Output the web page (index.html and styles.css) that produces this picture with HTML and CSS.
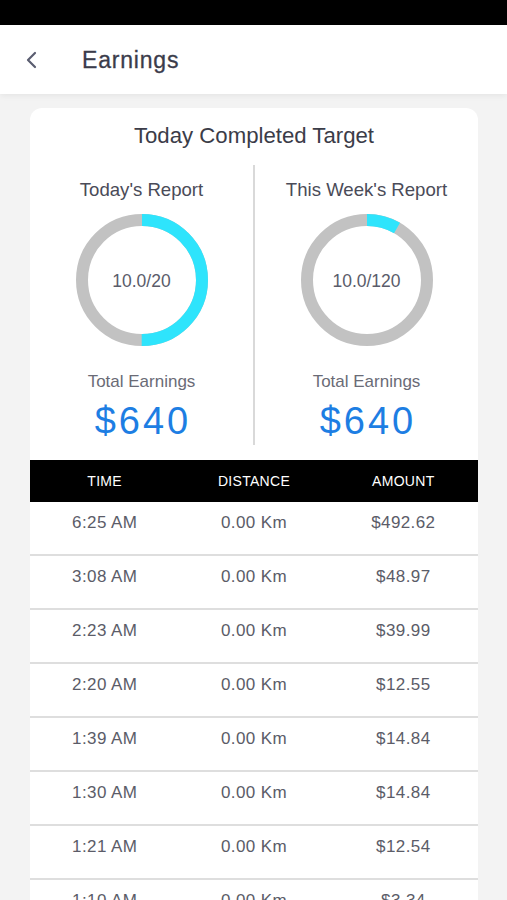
FILE: index.html
```html
<!DOCTYPE html>
<html>
<head>
<meta charset="utf-8">
<link rel="stylesheet" href="styles.css">
</head>
<body>
<div class="status"></div>
<header class="topbar">
  <svg class="back" width="14" height="18" viewBox="0 0 14 18"><path d="M11 2 L4 9 L11 16" fill="none" stroke="#5a5d70" stroke-width="2.2" stroke-linecap="round" stroke-linejoin="round"/></svg>
  <h1 class="title">Earnings</h1>
</header>
<main class="card">
  <h2 class="card-title">Today Completed Target</h2>
  <div class="reports">
    <section class="report">
      <div class="report-label">Today's Report</div>
      <div class="ring">
        <svg width="132" height="132" viewBox="0 0 132 132">
          <circle cx="66" cy="66" r="60" fill="none" stroke="#c2c2c2" stroke-width="12"/>
          <circle cx="66" cy="66" r="60" fill="none" stroke="#2ee4fc" stroke-width="12" stroke-dasharray="188.5 400" transform="rotate(-90 66 66)"/>
        </svg>
        <span class="ring-text">10.0/20</span>
      </div>
      <div class="earn-label">Total Earnings</div>
      <div class="earn-value">$640</div>
    </section>
    <div class="divider"></div>
    <section class="report">
      <div class="report-label">This Week's Report</div>
      <div class="ring">
        <svg width="132" height="132" viewBox="0 0 132 132">
          <circle cx="66" cy="66" r="60" fill="none" stroke="#c2c2c2" stroke-width="12"/>
          <circle cx="66" cy="66" r="60" fill="none" stroke="#2ee4fc" stroke-width="12" stroke-dasharray="31.4 400" transform="rotate(-90 66 66)"/>
        </svg>
        <span class="ring-text">10.0/120</span>
      </div>
      <div class="earn-label">Total Earnings</div>
      <div class="earn-value">$640</div>
    </section>
  </div>
  <div class="table">
    <div class="thead"><span>TIME</span><span>DISTANCE</span><span>AMOUNT</span></div>
    <div class="row"><span>6:25 AM</span><span>0.00 Km</span><span>$492.62</span></div>
    <div class="row"><span>3:08 AM</span><span>0.00 Km</span><span>$48.97</span></div>
    <div class="row"><span>2:23 AM</span><span>0.00 Km</span><span>$39.99</span></div>
    <div class="row"><span>2:20 AM</span><span>0.00 Km</span><span>$12.55</span></div>
    <div class="row"><span>1:39 AM</span><span>0.00 Km</span><span>$14.84</span></div>
    <div class="row"><span>1:30 AM</span><span>0.00 Km</span><span>$14.84</span></div>
    <div class="row"><span>1:21 AM</span><span>0.00 Km</span><span>$12.54</span></div>
    <div class="row"><span>1:10 AM</span><span>0.00 Km</span><span>$3.34</span></div>
  </div>
</main>
</body>
</html>
```
FILE: styles.css
```css
* { box-sizing: border-box; }
html, body { margin: 0; padding: 0; }
body {
  background: #f3f3f3;
  font-family: "Liberation Sans", Arial, sans-serif;
  height: 900px;
  overflow: hidden;
}
.status { height: 25px; background: #000; }
.topbar {
  height: 69px;
  background: #fff;
  display: flex;
  align-items: center;
  padding-left: 24px;
  box-shadow: 0 2px 6px rgba(0,0,0,0.06);
  position: relative;
  z-index: 1;
}
.back { margin-top: 1px; }
.title {
  margin: 2px 0 0 44px;
  font-size: 23px;
  font-weight: 400;
  color: #3b3c4b;
  letter-spacing: 0.8px;
  -webkit-text-stroke: 0.3px #3b3c4b;
}
.card {
  margin: 14px 29px 0 30px;
  background: #fff;
  border-radius: 12px 12px 0 0;
  overflow: hidden;
  padding-top: 14px;
}
.card-title {
  margin: 0;
  text-align: center;
  font-size: 22.2px;
  line-height: 28px;
  font-weight: 400;
  color: #3b3c48;
}
.reports {
  display: flex;
  margin-top: 15px;
}
.report {
  flex: 1;
  display: flex;
  flex-direction: column;
  align-items: center;
  padding-top: 14px;
}
.divider {
  width: 2px;
  background: #d9d9d9;
  height: 280px;
}
.report-label {
  font-size: 18.6px;
  line-height: 22px;
  color: #4a4b58;
}
.ring {
  position: relative;
  width: 132px;
  height: 132px;
  margin-top: 13px;
}
.ring svg { display: block; }
.ring-text {
  position: absolute;
  inset: 0;
  display: flex;
  align-items: center;
  justify-content: center;
  padding-top: 2px;
  font-size: 17.5px;
  color: #5a5c6a;
}
.earn-label {
  margin-top: 26px;
  font-size: 17px;
  line-height: 20px;
  color: #6a6b76;
}
.earn-value {
  margin-top: 6px;
  font-size: 38px;
  line-height: 46px;
  letter-spacing: 3px;
  padding-left: 3px;
  color: #1d7ee3;
}
.table { margin-top: 15px; }
.thead {
  height: 42px;
  background: #000;
  display: grid;
  grid-template-columns: 1fr 1fr 1fr;
  align-items: center;
  text-align: center;
  color: #fff;
  font-size: 14px;
  letter-spacing: 0.3px;
}
.row {
  height: 54px;
  display: grid;
  grid-template-columns: 1fr 1fr 1fr;
  text-align: center;
  padding-top: 11px;
  font-size: 17px;
  line-height: 20px;
  letter-spacing: 0.4px;
  color: #5b5c68;
  border-bottom: 2px solid #dedede;
}
```
